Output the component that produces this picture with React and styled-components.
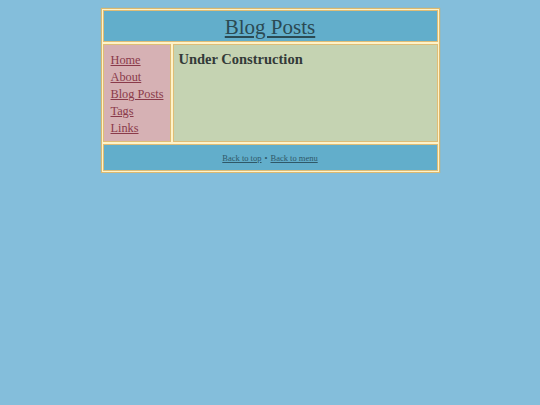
import styled, { createGlobalStyle } from "styled-components";

const Global = createGlobalStyle`
  html, body {
    margin: 0;
    background: #84bedb;
    font-family: "Liberation Serif", "Times New Roman", serif;
  }
`;

const LINKS = ["Home", "About", "Blog Posts", "Tags", "Links"];

function App() {
  return (
    <>
      <Global />
      <Page>
        <Frame>
          <Header>
            <TitleLink href="#">Blog Posts</TitleLink>
          </Header>
          <Sidebar>
            {LINKS.map((l) => (
              <NavLink key={l} href="#">
                {l}
              </NavLink>
            ))}
          </Sidebar>
          <Content>
            <Heading>Under Construction</Heading>
          </Content>
          <Footer>
            <FootLink href="#">Back to top</FootLink>
            <Dot>•</Dot>
            <FootLink href="#">Back to menu</FootLink>
          </Footer>
        </Frame>
      </Page>
    </>
  );
}

export default App;

const Page = styled.div`
  padding-top: 8px;
  display: flex;
  justify-content: center;
`;

const Frame = styled.div`
  width: 335px;
  display: grid;
  grid-template-columns: 68px 1fr;
  grid-template-rows: 32px 98px 27px;
  gap: 2px;
  padding: 1px;
  background: #fff3c9;
  border: 1px solid #dcb96f;
  box-shadow: 0 0 1px #c9a860;
`;

const Cell = styled.div`
  border: 1px solid #dfbd76;
  box-sizing: border-box;
`;

const Header = styled(Cell)`
  grid-column: 1 / 3;
  background: #62aecb;
  display: flex;
  justify-content: center;
  align-items: center;
  padding-top: 2px;
`;

const TitleLink = styled.a`
  font-size: 21px;
  color: #2b4a53;
  text-decoration: underline;
`;

const Sidebar = styled(Cell)`
  background: #d6b1b4;
  padding: 7px 7px;
  display: flex;
  flex-direction: column;
`;

const NavLink = styled.a`
  font-size: 12.3px;
  line-height: 17px;
  color: #8a3a4a;
  text-decoration: underline;
  white-space: nowrap;
`;

const Content = styled(Cell)`
  background: #c5d3b2;
  padding: 5px 5px;
`;

const Heading = styled.h2`
  margin: 0;
  font-size: 14.5px;
  line-height: 18px;
  font-weight: bold;
  color: #333a38;
`;

const Footer = styled(Cell)`
  grid-column: 1 / 3;
  background: #62aecb;
  display: flex;
  justify-content: center;
  align-items: center;
  gap: 3px;
  font-size: 8.5px;
`;

const FootLink = styled.a`
  color: #2f5868;
  text-decoration: underline;
`;

const Dot = styled.span`
  color: #2f5868;
`;
